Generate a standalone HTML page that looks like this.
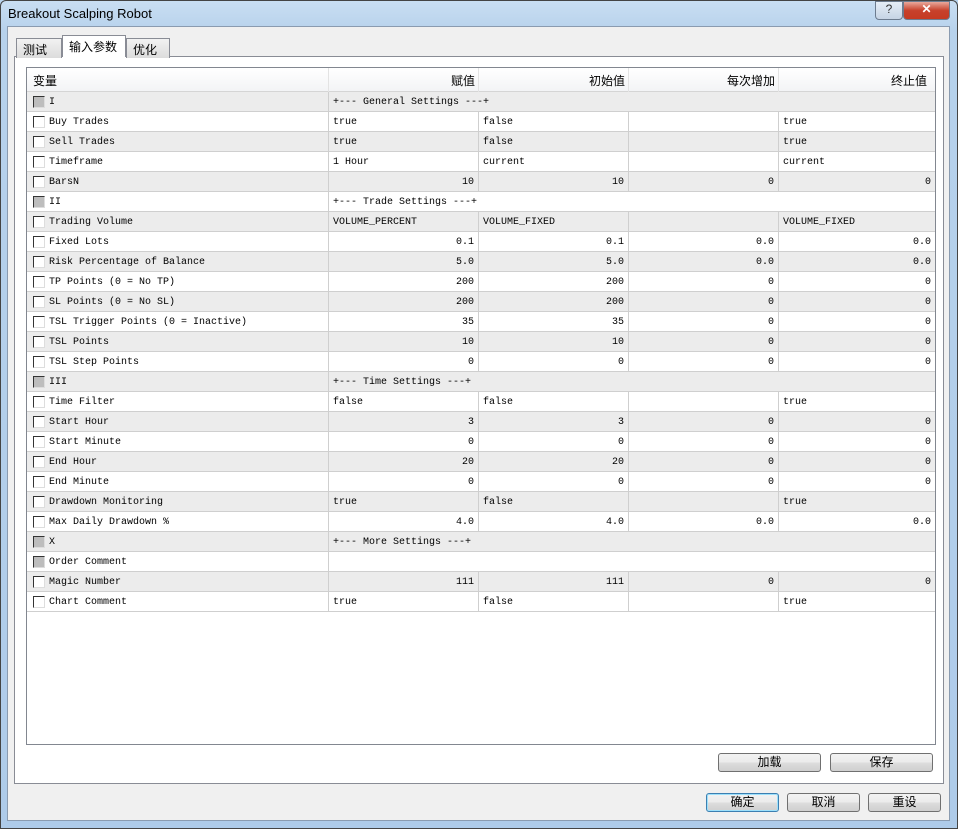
<!DOCTYPE html>
<html><head><meta charset="utf-8"><style>
*{margin:0;padding:0;box-sizing:border-box}
body{width:958px;height:829px;overflow:hidden;background:#b9d4ee;font-family:"Liberation Sans","Noto Sans CJK SC",sans-serif;position:relative}
.frame{position:absolute;left:0;top:0;width:958px;height:829px;border:1px solid #444;border-radius:6px 6px 0 0;background:linear-gradient(#c9def2,#b7d2ec 30px,#aecbe9)}
.title{position:absolute;left:8px;top:6px;font-size:13px;color:#000}
.inner{position:absolute;left:7px;top:26px;width:943px;height:795px;background:#f0f0f0;border:1px solid #8a9bb0}
.tbtn{position:absolute;top:1px;height:19px;border:1px solid #6d7c8f;border-radius:0 0 4px 4px}
.panel{position:absolute;left:14px;top:56px;width:930px;height:728px;background:#fff;border:1px solid #898c95}
.tab{position:absolute;height:20px;border:1px solid #898c95;border-bottom:none;font-size:12px;padding:2px 0 0 6px;background:linear-gradient(#f2f2f2,#dcdcdc)}
.tbl{position:absolute;left:26px;top:67px;width:910px;height:678px;border:1px solid #828790;background:#fff}
.hdr{position:absolute;left:0;top:0;width:908px;height:24px;background:linear-gradient(#fff,#f3f4f6);border-bottom:1px solid #d5d5d5;font-size:12px}
.hdr div{position:absolute;top:4px}
.row{position:absolute;left:0;width:908px;height:20px;border-bottom:1px solid #cfcfcf;font-family:"Liberation Mono",monospace;font-size:10px;line-height:17px}
.g{background:#ececec}.w{background:#fff}
.c{position:absolute;top:0;height:19px;border-left:1px solid #cfcfcf;padding:2px 4px 0;white-space:nowrap;overflow:hidden}
.r{text-align:right}
.cb{position:absolute;left:6px;top:4px;width:12px;height:12px;border:1px solid #333;border-right-color:#ddd;border-bottom-color:#ddd;background:#fff}
.cb.d{background:#bdbdbd}
.nm{position:absolute;left:22px;top:2px}
.btn{position:absolute;height:19px;border:1px solid #707070;border-radius:3px;background:linear-gradient(#f2f2f2,#ebebeb 50%,#dddddd 51%,#cfcfcf);font-size:12px;text-align:center;line-height:17px}
</style></head><body>
<div class="frame"></div>
<div class="title">Breakout Scalping Robot</div>
<div class="tbtn" style="left:875px;width:28px;background:linear-gradient(#e6eef7,#c6d4e4);font-size:12px;text-align:center;color:#333">?</div>
<div class="tbtn" style="left:903px;width:47px;background:linear-gradient(#e9a99c,#c7412b 50%,#c63a22);color:#fff;font-size:12px;text-align:center;font-weight:bold">✕</div>
<div class="inner"></div>
<div class="panel"></div>
<div class="tab" style="left:16px;top:38px;width:46px">测试</div>
<div class="tab" style="left:126px;top:38px;width:44px">优化</div>
<div class="tab" style="left:62px;top:35px;width:64px;height:22px;background:#fff;z-index:2">输入参数</div>
<div class="tbl">
<div class="hdr">
<div style="left:6px">变量</div>
<div style="left:301px;width:150px;height:24px;top:0;border-left:1px solid #e3e3e3"></div>
<div style="left:451px;width:150px;height:24px;top:0;border-left:1px solid #e3e3e3"></div>
<div style="left:601px;width:150px;height:24px;top:0;border-left:1px solid #e3e3e3"></div>
<div style="left:751px;width:150px;height:24px;top:0;border-left:1px solid #e3e3e3"></div>
<div style="right:460px">赋值</div>
<div style="right:310px">初始值</div>
<div style="right:160px">每次增加</div>
<div style="right:8px">终止值</div>
</div>
<div id="rows"></div>
</div>
<div class="btn" style="left:718px;top:753px;width:103px">加载</div>
<div class="btn" style="left:830px;top:753px;width:103px">保存</div>
<div class="btn" style="left:706px;top:793px;width:73px;border-color:#3c7fb1;box-shadow:inset 0 0 0 1px #9de0fb">确定</div>
<div class="btn" style="left:787px;top:793px;width:73px">取消</div>
<div class="btn" style="left:868px;top:793px;width:73px">重设</div>
<script>
var R=[
["I","G","+--- General Settings ---+"],
["Buy Trades","","true","false","","true"],
["Sell Trades","","true","false","","true"],
["Timeframe","","1 Hour","current","","current"],
["BarsN","N","10","10","0","0"],
["II","G","+--- Trade Settings ---+"],
["Trading Volume","","VOLUME_PERCENT","VOLUME_FIXED","","VOLUME_FIXED"],
["Fixed Lots","N","0.1","0.1","0.0","0.0"],
["Risk Percentage of Balance","N","5.0","5.0","0.0","0.0"],
["TP Points (0 = No TP)","N","200","200","0","0"],
["SL Points (0 = No SL)","N","200","200","0","0"],
["TSL Trigger Points (0 = Inactive)","N","35","35","0","0"],
["TSL Points","N","10","10","0","0"],
["TSL Step Points","N","0","0","0","0"],
["III","G","+--- Time Settings ---+"],
["Time Filter","","false","false","","true"],
["Start Hour","N","3","3","0","0"],
["Start Minute","N","0","0","0","0"],
["End Hour","N","20","20","0","0"],
["End Minute","N","0","0","0","0"],
["Drawdown Monitoring","","true","false","","true"],
["Max Daily Drawdown %","N","4.0","4.0","0.0","0.0"],
["X","G","+--- More Settings ---+"],
["Order Comment","G",""],
["Magic Number","N","111","111","0","0"],
["Chart Comment","","true","false","","true"]];
var h="";
R.forEach(function(r,i){
 h+='<div class="row '+(i%2?'w':'g')+'" style="top:'+(24+i*20)+'px"><div class="cb'+(r[1]=="G"?' d':'')+'"></div><div class="nm">'+r[0]+'</div>';
 if(r[1]=="G"){h+='<div class="c" style="left:301px;width:607px">'+r[2]+'</div>';}
 else{for(var k=0;k<4;k++){var w=k==3?157:150;h+='<div class="c'+(r[1]=="N"?' r':'')+'" style="left:'+(301+150*k)+'px;width:'+w+'px">'+r[2+k]+'</div>';}}
 h+='</div>';
});
document.getElementById("rows").innerHTML=h;
</script>
</body></html>
